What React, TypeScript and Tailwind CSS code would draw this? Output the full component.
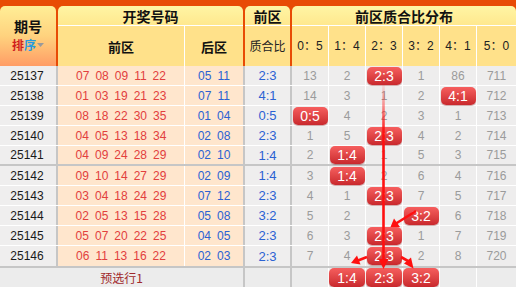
import React from 'react';

type Row = { id: string; f: string[]; b: string[]; r: string; d: (string | null)[] };

const rows: Row[] = [
  { id: '25137', f: ['07', '08', '09', '11', '22'], b: ['05', '11'], r: '2:3', d: ['13', '2', null, '1', '86', '711'] },
  { id: '25138', f: ['01', '03', '19', '21', '23'], b: ['07', '11'], r: '4:1', d: ['14', '3', '1', '2', null, '712'] },
  { id: '25139', f: ['08', '18', '22', '30', '35'], b: ['01', '04'], r: '0:5', d: [null, '4', '2', '3', '1', '713'] },
  { id: '25140', f: ['04', '05', '13', '18', '34'], b: ['02', '08'], r: '2:3', d: ['1', '5', null, '4', '2', '714'] },
  { id: '25141', f: ['04', '09', '24', '28', '29'], b: ['02', '10'], r: '1:4', d: ['2', null, '1', '5', '3', '715'] },
  { id: '25142', f: ['09', '10', '14', '27', '29'], b: ['02', '09'], r: '1:4', d: ['3', null, '2', '6', '4', '716'] },
  { id: '25143', f: ['03', '04', '18', '24', '29'], b: ['07', '12'], r: '2:3', d: ['4', '1', null, '7', '5', '717'] },
  { id: '25144', f: ['02', '05', '13', '15', '28'], b: ['05', '08'], r: '3:2', d: ['5', '2', '', null, '6', '718'] },
  { id: '25145', f: ['05', '07', '20', '22', '25'], b: ['04', '05'], r: '2:3', d: ['6', '3', null, '1', '7', '719'] },
  { id: '25146', f: ['06', '11', '13', '16', '22'], b: ['02', '03'], r: '2:3', d: ['7', '4', null, '2', '8', '720'] },
];

const labels = ['0:5', '1:4', '2:3', '3:2', '4:1', '5:0'];
const headLabels = ['0：5', '1：4', '2：3', '3：2', '4：1', '5：0'];

function Badge({ text, tall }: { text: string; tall?: boolean }) {
  return (
    <div
      className={
        tall
          ? 'w-[36px] h-[19px] rounded-[5px] bg-linear-to-b from-[#f65e5e] to-[#c9282d] text-white text-[14px] leading-none flex items-center justify-center shadow-[0_1px_1px_rgba(120,0,0,0.35)]'
          : 'w-[35px] h-[18px] rounded-[5px] bg-linear-to-b from-[#f65e5e] to-[#c9282d] text-white text-[14px] leading-none flex items-center justify-center shadow-[0_1px_1px_rgba(120,0,0,0.35)]'
      }
    >
      {text}
    </div>
  );
}

function DistCell({ v, i, label }: { v: string | null; i: number; label: string }) {
  return (
    <div
      className={
        i === 5
          ? 'w-[39px] bg-[#eeeded] flex items-center justify-center text-[#9b9b9b]'
          : 'w-[37px] border-r border-white bg-[#eeeded] flex items-center justify-center text-[#9b9b9b]'
      }
    >
      {v === null ? <Badge text={label} /> : v}
    </div>
  );
}

export default function App() {
  return (
    <div className="relative w-[516px] h-[287px] overflow-hidden bg-[#eeeded] font-['Liberation_Sans','Noto_Sans_CJK_SC',sans-serif] text-[12px] leading-none">
      {/* Header */}
      <div className="flex gap-[2px] h-[66px] pt-[6px] bg-[#e84b05]">
        <div className="w-[56px] rounded-t-[5px] bg-linear-to-b from-[#ffee96] via-[#ffd27e] to-[#ff9c65] flex flex-col items-center justify-center pb-[2px]">
          <div className="h-[19px] leading-[19px] text-[14px] font-bold text-[#111] font-['Noto_Sans_CJK_SC',sans-serif]">期号</div>
          <div className="h-[17px] leading-[17px] flex items-center text-[12px] font-bold font-['Noto_Sans_CJK_SC',sans-serif]">
            <span className="text-[#d01f1f]">排</span>
            <span className="text-[#259be0]">序</span>
            <svg width="7" height="4" viewBox="0 0 7 4" className="ml-[1px] mt-[1px]">
              <path d="M0 0 L7 0 L3.5 4 Z" fill="#9a9a9a" />
            </svg>
          </div>
        </div>
        <div className="w-[185px] rounded-t-[5px] overflow-hidden flex flex-col">
          <div className="h-[20px] border-b border-white bg-linear-to-b from-[#fff5a4] to-[#ffe88e] flex items-center justify-center text-[14px] font-bold text-[#111] font-['Noto_Sans_CJK_SC',sans-serif]">
            开奖号码
          </div>
          <div className="flex flex-1 bg-[#ffe18a] text-[13px] font-bold text-[#111] font-['Noto_Sans_CJK_SC',sans-serif]">
            <div className="w-[127px] border-r border-white flex items-center justify-center">前区</div>
            <div className="w-[58px] flex items-center justify-center">后区</div>
          </div>
        </div>
        <div className="w-[45px] rounded-t-[5px] overflow-hidden flex flex-col">
          <div className="h-[20px] border-b border-white bg-linear-to-b from-[#fff5a4] to-[#ffe88e] flex items-center justify-center text-[14px] font-bold text-[#111] font-['Noto_Sans_CJK_SC',sans-serif]">
            前区
          </div>
          <div className="flex-1 bg-[#ffe18a] flex items-center justify-center text-[12px] text-[#222] font-['Noto_Sans_CJK_SC',sans-serif]">
            质合比
          </div>
        </div>
        <div className="w-[224px] rounded-t-[5px] overflow-hidden flex flex-col">
          <div className="h-[20px] border-b border-white bg-linear-to-b from-[#fff5a4] to-[#ffe88e] flex items-center justify-center text-[14px] font-bold text-[#111] font-['Noto_Sans_CJK_SC',sans-serif]">
            前区质合比分布
          </div>
          <div className="flex flex-1 bg-[#ffe18a] text-[12px] text-[#222]">
            {headLabels.map((l, i) => (
              <div
                key={l}
                className={
                  i === 5
                    ? 'w-[39px] flex items-center justify-center'
                    : 'w-[37px] border-r border-white flex items-center justify-center'
                }
              >
                {l}
              </div>
            ))}
          </div>
        </div>
      </div>

      {/* Body */}
      {rows.map((row, ri) => (
        <div
          key={row.id}
          className={
            ri === 4
              ? 'flex h-[20px] border-b-2 border-[#c6c6c6]'
              : ri === 9
              ? 'flex h-[22px] border-b-2 border-[#c6c6c6]'
              : 'flex h-[20px] border-b border-white'
          }
        >
          <div className="w-[58px] border-r-2 border-[#c6c6c6] bg-[#efeeee] flex items-center justify-center text-[#1a1a1a] pr-[2px]">
            {row.id}
          </div>
          <div className="w-[127px] border-r border-white bg-[#ffe6cd] flex items-center justify-center gap-[6px] text-[#e2403d]">
            {row.f.map((n, k) => (
              <span key={k}>{n}</span>
            ))}
          </div>
          <div className="w-[60px] border-r-2 border-[#c6c6c6] bg-[#ffe6cd] flex items-center justify-center gap-[6px] text-[#2b62d3]">
            {row.b.map((n, k) => (
              <span key={k}>{n}</span>
            ))}
          </div>
          <div className="w-[47px] border-r-2 border-[#c6c6c6] bg-[#efeeee] flex items-center justify-center text-[13px] text-[#2b62d3]">
            {row.r}
          </div>
          {row.d.map((v, i) => (
            <DistCell key={i} v={v} i={i} label={labels[i]} />
          ))}
        </div>
      ))}

      {/* Preview row */}
      <div className="flex h-[19px]">
        <div className="w-[245px] border-r-2 border-[#c6c6c6] bg-[#ececec] flex items-center justify-center text-[#a0292b] font-['Noto_Sans_CJK_SC',sans-serif]">
          预选行1
        </div>
        <div className="w-[47px] border-r-2 border-[#c6c6c6] bg-[#ececec]" />
        {[null, '1:4', '2:3', '3:2', null, null].map((b, i) => (
          <div
            key={i}
            className={
              i === 5
                ? 'w-[39px] bg-[#ececec] flex items-center justify-center'
                : 'w-[37px] border-r border-white bg-[#ececec] flex items-center justify-center'
            }
          >
            {b ? <Badge text={b} tall /> : null}
          </div>
        ))}
      </div>

      {/* Trend overlay */}
      <svg className="absolute inset-0 pointer-events-none" width="516" height="287" viewBox="0 0 516 287">
        <defs>
          <linearGradient id="fade" gradientUnits="userSpaceOnUse" x1="0" y1="85" x2="0" y2="135">
            <stop offset="0" stopColor="#ff2020" stopOpacity="0.08" />
            <stop offset="1" stopColor="#ff1010" stopOpacity="1" />
          </linearGradient>
        </defs>
        <line x1="383.5" y1="85" x2="383.5" y2="262" stroke="url(#fade)" strokeWidth="2.6" />
        <path d="M378.5 259 L388.5 259 L383.5 269 Z" fill="#ff1010" />
        {/* 3:2 -> 2:3 */}
        <line x1="416" y1="211" x2="396" y2="223.5" stroke="#ff1010" strokeWidth="2.6" />
        <path d="M390.5 227 L394 218.5 L400 227 Z" fill="#ff1010" />
        {/* 2:3 -> 1:4 */}
        <line x1="367" y1="257" x2="358" y2="260.5" stroke="#ff1010" strokeWidth="2.6" />
        <path d="M351 263 L357 255.5 L360.5 264.5 Z" fill="#ff1010" />
        {/* 2:3 -> 3:2 */}
        <line x1="401" y1="257" x2="408" y2="261" stroke="#ff1010" strokeWidth="2.6" />
        <path d="M413.5 268.5 L404 263.5 L411 257.5 Z" fill="#ff1010" />
      </svg>
    </div>
  );
}
